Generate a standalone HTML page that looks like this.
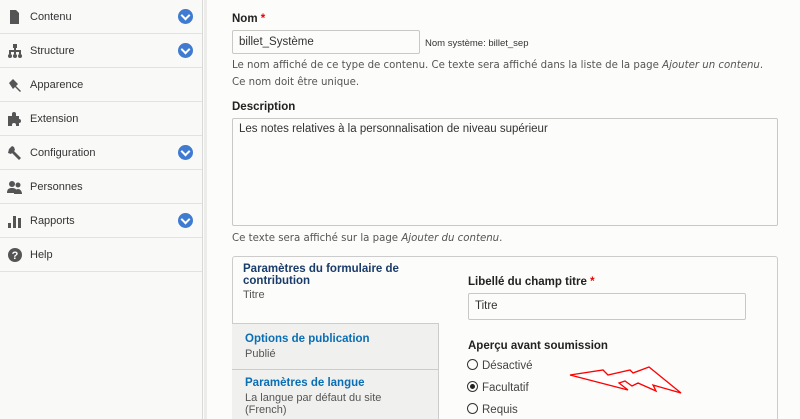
<!DOCTYPE html>
<html><head><meta charset="utf-8"><style>
*{box-sizing:border-box;margin:0;padding:0}
html,body{width:800px;height:419px;overflow:hidden}
body{background:#fcfcfa;font-family:"Liberation Sans","DejaVu Sans",sans-serif;font-size:11px;color:#333;position:relative}
.side{position:absolute;left:0;top:0;width:203px;height:419px;background:#f9f9f8;border-right:1px solid #d8d8d4}
.item{height:34px;border-bottom:1px solid #e2e2de;position:relative;font-size:11px;color:#333;line-height:34px;padding-left:30px}
.item svg.ic{position:absolute;left:7px;top:9px}
.chev{position:absolute;left:178px;top:9px;width:15px;height:15px;border-radius:50%;background:#3f7bd0}
.chev:after{content:"";position:absolute;left:4px;top:3px;width:5px;height:5px;border-right:2px solid #fff;border-bottom:2px solid #fff;transform:rotate(45deg)}
.edge{position:absolute;left:204px;top:0;width:3px;height:419px;background:#ececea}
.abs{position:absolute}
label{font-weight:bold;color:#222;font-size:11.5px}
.req{color:#e00}
.inp{position:absolute;border:1px solid #c8c8c4;border-radius:2px;background:#fcfcfa;padding-left:6px;font-size:11.5px;color:#333}
.desc{color:#555;font-size:10.2px;line-height:17px;font-family:"DejaVu Sans",sans-serif}
.tabs{position:absolute;left:232px;top:256px;width:546px;height:170px;border:1px solid #ccc;border-radius:3px;background:#fcfcfa}
.tcol{position:absolute;left:232px;top:323px;width:207px;height:100px;background:#f0f0ee;border-right:1px solid #ccc}
.tab{position:absolute;left:0;width:207px;border-bottom:1px solid #ccc;padding:0 0 0 13px}
.tab b{color:#0a6eb4;font-size:11.5px;display:block}
.tab span{color:#555;font-size:11px;display:block;margin-top:3px;line-height:12px;width:165px}
.radio{position:absolute;left:467px;font-size:11.5px;color:#444}
.radio i{display:inline-block;width:11px;height:11px;border:1px solid #333;border-radius:50%;vertical-align:-1px;margin-right:4px;position:relative}
.radio i.on:after{content:"";position:absolute;left:2px;top:2px;width:5px;height:5px;border-radius:50%;background:#222}
</style></head><body>
<div class="side">
<div class="item"><svg class="ic" width="14" height="16" viewBox="0 0 14 16"><path d="M3 1h6l3 3v11H3z" fill="#555"/></svg>Contenu<div class="chev"></div></div>
<div class="item"><svg class="ic" width="16" height="16" viewBox="0 0 16 16"><g fill="#555"><rect x="6" y="1" width="4" height="4"/><rect x="7" y="5" width="2" height="3"/><rect x="2" y="7" width="12" height="2"/><rect x="2" y="8" width="2" height="3"/><rect x="7" y="8" width="2" height="3"/><rect x="12" y="8" width="2" height="3"/><circle cx="3" cy="13" r="2"/><circle cx="8" cy="13" r="2"/><circle cx="13" cy="13" r="2"/></g></svg>Structure<div class="chev"></div></div>
<div class="item"><svg class="ic" width="16" height="16" viewBox="0 0 16 16"><path d="M2 6l4-4 5 5-2 2 5 5-1 1-5-5-2 2z" fill="#555"/></svg>Apparence</div>
<div class="item"><svg class="ic" width="16" height="16" viewBox="0 0 16 16"><path d="M1 5h4V3a2 2 0 014 0v2h3v3a2 2 0 010 4v3H9v-1a2 2 0 00-4 0v1H1z" fill="#555"/></svg>Extension</div>
<div class="item"><svg class="ic" width="16" height="16" viewBox="0 0 16 16"><path d="M2 4l3-3 2 1 1 3-1 1 7 7-2 2-7-7-1 1-3-1z" fill="#555"/></svg>Configuration<div class="chev"></div></div>
<div class="item"><svg class="ic" width="16" height="16" viewBox="0 0 16 16"><g fill="#555"><circle cx="5" cy="5" r="3"/><path d="M0 14c0-4 2-5 5-5s5 1 5 5z"/><circle cx="11" cy="6" r="2.5"/><path d="M7 15c0-3 2-5 4-5s4 2 4 5z"/></g></svg>Personnes</div>
<div class="item"><svg class="ic" width="16" height="16" viewBox="0 0 16 16"><g fill="#555"><rect x="1" y="10" width="3" height="5"/><rect x="6" y="3" width="3" height="12"/><rect x="11" y="5" width="3" height="10"/></g></svg>Rapports<div class="chev"></div></div>
<div class="item"><svg class="ic" width="16" height="16" viewBox="0 0 16 16"><circle cx="8" cy="8" r="7" fill="#555"/><text x="8" y="12" text-anchor="middle" font-size="11" font-weight="bold" fill="#fff" font-family="Liberation Sans">?</text></svg>Help</div>
</div>
<div class="edge"></div>

<label class="abs" style="left:232px;top:13px">Nom <span class="req">*</span></label>
<div class="inp" style="left:232px;top:30px;width:188px;height:24px;line-height:22px">billet_Système</div>
<div class="abs" style="left:425px;top:38px;font-size:9.5px;color:#333">Nom système: billet_sep</div>
<div class="abs desc" style="left:232px;top:57px;width:560px">Le nom affiché de ce type de contenu. Ce texte sera affiché dans la liste de la page <i>Ajouter un contenu</i>.<br>Ce nom doit être unique.</div>
<label class="abs" style="left:232px;top:101px">Description</label>
<div class="inp" style="left:232px;top:118px;width:546px;height:108px;padding-top:4px">Les notes relatives à la personnalisation de niveau supérieur</div>
<div class="abs desc" style="left:232px;top:230px">Ce texte sera affiché sur la page <i>Ajouter du contenu</i>.</div>

<div class="tabs"></div>
<div class="abs" style="left:243px;top:263px;width:190px;font-weight:bold;color:#1a3c6a;font-size:11.5px;line-height:12px">Paramètres du formulaire de contribution</div>
<div class="abs" style="left:243px;top:289px;font-size:11px;color:#555">Titre</div>
<div class="tcol">
<div class="tab" style="top:0;height:47px;border-top:1px solid #ccc;padding-top:9px"><b>Options de publication</b><span>Publié</span></div>
<div class="tab" style="top:47px;height:60px;padding-top:7px"><b>Paramètres de langue</b><span>La langue par défaut du site (French)</span></div>
</div>

<label class="abs" style="left:468px;top:276px">Libellé du champ titre <span class="req">*</span></label>
<div class="inp" style="left:468px;top:293px;width:278px;height:27px;line-height:25px">Titre</div>
<label class="abs" style="left:468px;top:340px">Aperçu avant soumission</label>
<div class="radio" style="top:359px"><i></i>Désactivé</div>
<div class="radio" style="top:381px"><i class="on"></i>Facultatif</div>
<div class="radio" style="top:403px"><i></i>Requis</div>

<svg class="abs" style="left:0;top:0" width="800" height="419"><polygon points="570,375 603,370 608,375 630,370 633,373 649,367 681,393 653,385 656,391 638,383 632,386 625,381 619,383 628,390" fill="#fff" stroke="#f00" stroke-width="1.3"/></svg>
</body></html>
